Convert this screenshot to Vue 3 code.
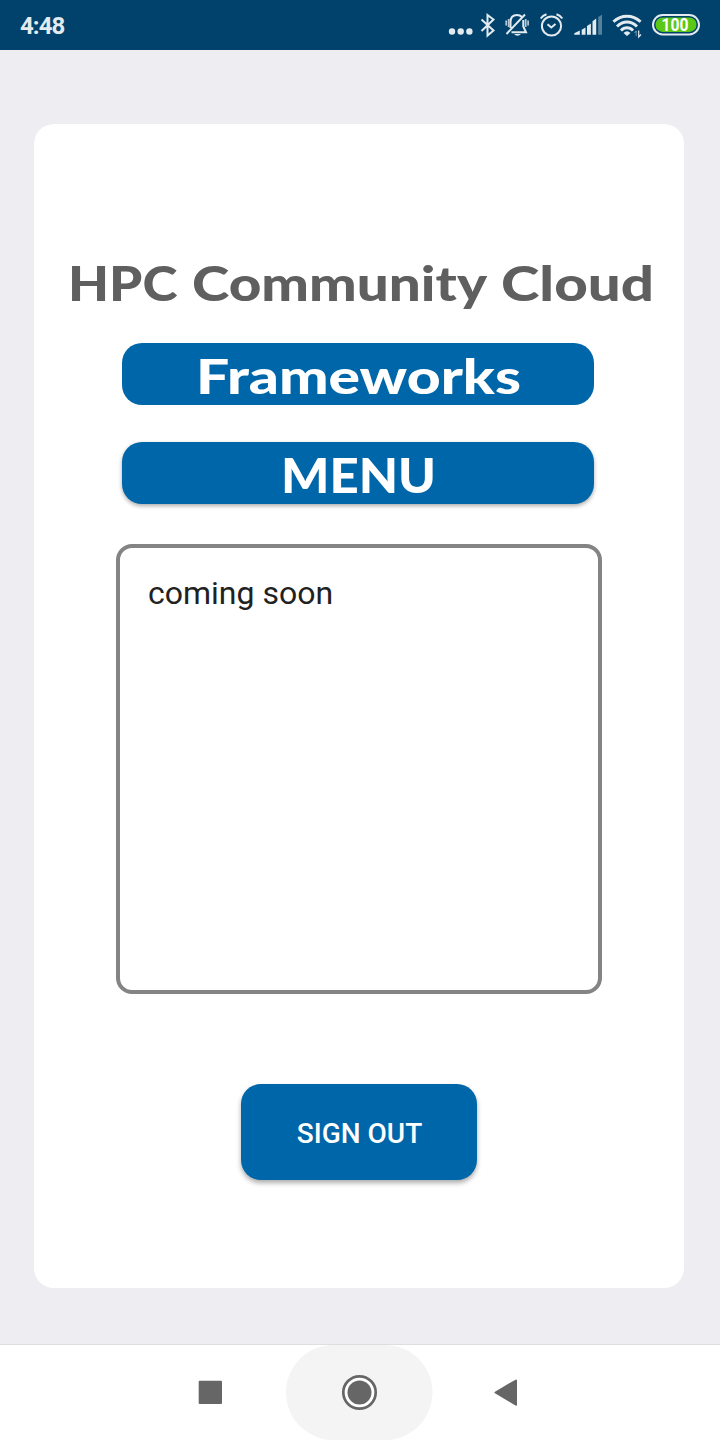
<script setup>
const titleWords = [
  { text: 'HPC ', x: 68, length: 122 },
  { text: 'Community ', x: 192, length: 307 },
  { text: 'Cloud', x: 501, length: 153 },
]
</script>

<template>
  <div class="screen">
    <header class="status">
      <span class="clock">4:48</span>
      <svg class="status-icons" width="260" height="50" viewBox="440 0 260 50">
        <g fill="#e3ebf0">
          <circle cx="452" cy="31.5" r="3.2" />
          <circle cx="460.7" cy="31.5" r="3.2" />
          <circle cx="469.4" cy="31.5" r="3.2" />
        </g>
        <path d="M481.5 19.5L493.5 30.5L487.5 35.5V15L493.5 19.5L481.5 31" fill="none" stroke="#e3ebf0" stroke-width="2" />
        <g fill="none" stroke="#e3ebf0" stroke-width="2">
          <path d="M510.5 28V22C510.5 17 513 15 517 15C519 15 520.5 15.6 521.7 16.8M523.3 20V26.5L526 32.3H511.5M506.5 34L525 14.5" />
          <path d="M506.2 20.5V25.5M508.6 19V27M525.7 19V27M528.1 20.5V25.5" stroke-width="1.7" opacity=".8" />
        </g>
        <path d="M514 34H521Q517.5 37.5 514 34Z" fill="#e3ebf0" />
        <g fill="none" stroke="#e3ebf0" stroke-width="2">
          <circle cx="551.5" cy="26" r="9.6" />
          <path d="M547.5 24.2L551.3 27.5L555.5 24M540.7 18.5Q542.8 15.5 546.5 14.3M556.5 14.3Q560.2 15.5 562.3 18.5" />
        </g>
        <g fill="#e3ebf0">
          <path d="M574.3 34.8V33.3L579.8 30.5V34.8ZM581.7 29.7L585.5 27.5V34.8H581.7ZM587 26L590.9 23.6V34.8H587ZM592.5 21.3L596.2 18.6V34.8H592.5Z" />
          <path d="M598.2 17L602 14.8V34.8H598.2Z" opacity=".38" />
        </g>
        <g fill="none" stroke="#e3ebf0" stroke-width="2.9">
          <path d="M613.4 21.8Q619.5 16.2 627 16.2T640.6 21.8M617 26.5Q621.5 22 627 22T637 26.5M621 30.6Q623.5 27.8 627 27.8T633 30.6" />
        </g>
        <path d="M623.5 33Q627 29.5 630.5 33L627 36Z" fill="#e3ebf0" />
        <path d="M636.2 36V31L634.5 33" fill="none" stroke="#e3ebf0" stroke-width="1" opacity=".5" />
        <path d="M638.7 30.5V37L641 34.5" fill="none" stroke="#e3ebf0" stroke-width="1.2" />
        <rect x="653" y="15" width="46" height="19.4" rx="9.7" fill="#00426b" stroke="#e3ebf0" stroke-width="2" />
        <rect x="655.5" y="17.5" width="41" height="14.4" rx="7.2" fill="#5bc816" />
        <text x="661.5" y="31.2" class="battery-text" textLength="27" lengthAdjust="spacingAndGlyphs">100</text>
      </svg>
    </header>

    <main class="backdrop">
      <section class="card">
        <svg class="title" width="650" height="70" viewBox="34 250 650 70">
          <text y="301" class="display title-text"><tspan v-for="word in titleWords" :key="word.text" :x="word.x" :textLength="word.length" lengthAdjust="spacingAndGlyphs">{{ word.text }}</tspan></text>
        </svg>
        <div class="banner">
          <svg width="472" height="62" viewBox="122 343 472 62">
            <text x="196" y="394" class="display" textLength="325" lengthAdjust="spacingAndGlyphs">Frameworks</text>
          </svg>
        </div>
        <button class="banner raised">
          <svg width="472" height="62" viewBox="122 442 472 62">
            <text x="281" y="493" class="display" textLength="155" lengthAdjust="spacingAndGlyphs">MENU</text>
          </svg>
        </button>
        <div class="content">coming soon</div>
        <button class="signout">SIGN OUT</button>
      </section>
    </main>

    <nav class="navbar">
      <svg width="720" height="95" viewBox="0 1345 720 95">
        <rect x="286" y="1345" width="146.5" height="95" rx="47.5" fill="#f4f4f4" />
        <rect x="198.7" y="1380.7" width="23.3" height="23.3" rx="1" fill="#666" />
        <circle cx="359.5" cy="1392.5" r="16.2" fill="#fff" stroke="#666" stroke-width="2.7" />
        <circle cx="359.5" cy="1392.5" r="12" fill="#666" />
        <path d="M495.5 1392.5L516 1380.5V1404.7Z" fill="#666" stroke="#666" stroke-width="2" stroke-linejoin="round" />
      </svg>
    </nav>
  </div>
</template>

<style>
body {
  margin: 0;
}
</style>

<style scoped>
.screen {
  width: 720px;
  height: 1440px;
  display: flex;
  flex-direction: column;
  overflow: hidden;
  background: #ededf2;
  font-family: Roboto, sans-serif;
}
.status {
  height: 50px;
  flex: none;
  display: flex;
  align-items: center;
  justify-content: space-between;
  padding: 0 20px;
  background: #00426b;
}
.clock {
  color: #e3ebf0;
  font-size: 24px;
  font-weight: 700;
  line-height: 28px;
  padding-top: 2px;
  letter-spacing: -0.9px;
}
.battery-text {
  fill: #fff;
  font: 700 18px Roboto, sans-serif;
}
svg {
  display: block;
}
.backdrop {
  flex: 1;
  padding: 74px 36px 56px 34px;
}
.card {
  box-sizing: border-box;
  height: 1164px;
  padding-top: 126px;
  border-radius: 20px;
  background: #fff;
  display: flex;
  flex-direction: column;
}
.display {
  font-family: Lato, sans-serif;
  font-size: 47px;
  font-weight: 900;
  fill: #fff;
  white-space: pre;
}
.title-text {
  fill: #5f5f5f;
}
.banner {
  width: 472px;
  height: 62px;
  flex: none;
  margin: 23px 0 0 88px;
  padding: 0;
  border: 0;
  border-radius: 20px;
  background: #0066aa;
}
.raised {
  margin-top: 37px;
  box-shadow: 0 2px 4px rgba(0, 0, 0, 0.33);
}
.content {
  box-sizing: border-box;
  width: 486px;
  height: 450px;
  margin: 40px 0 0 82px;
  padding: 26px 28px;
  border: 4px solid #848484;
  border-radius: 16px;
  color: #212121;
  font-size: 32px;
  line-height: 38px;
}
.signout {
  width: 236px;
  height: 96px;
  margin: 90px 0 0 207px;
  padding: 3px 0 0 1px;
  border: 0;
  border-radius: 20px;
  background: #0066aa;
  box-shadow: 0 3px 5px rgba(0, 0, 0, 0.33);
  color: #fff;
  font: 500 28px Roboto, sans-serif;
}
.navbar {
  box-sizing: border-box;
  height: 96px;
  flex: none;
  border-top: 1px solid #dedee0;
  background: #fff;
}
</style>
